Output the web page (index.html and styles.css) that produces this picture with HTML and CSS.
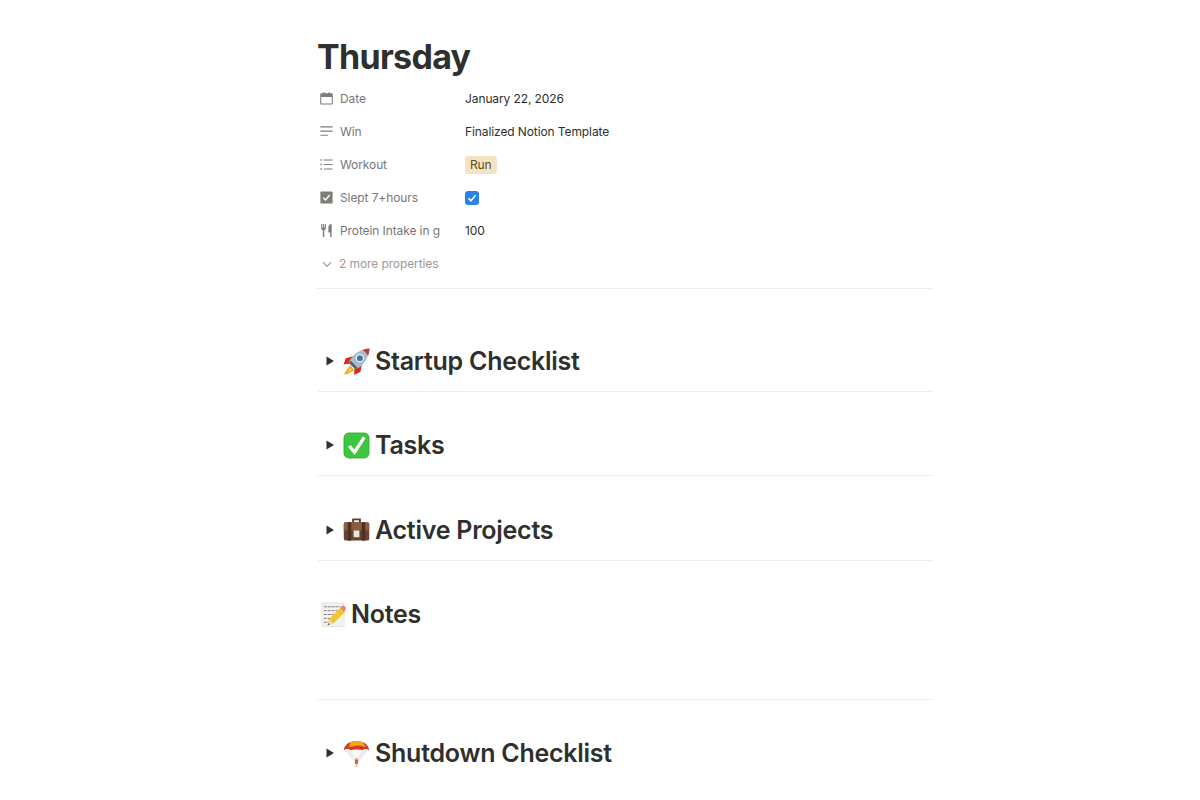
FILE: index.html
```html
<!DOCTYPE html>
<html lang="en">
<head>
<meta charset="utf-8">
<title>Thursday</title>
<link rel="stylesheet" href="styles.css">
</head>
<body>
<main class="page">
  <h1 class="title">Thursday</h1>
  <section class="props">
    <div class="prop">
      <div class="prop-name">
        <svg class="prop-icon" viewBox="0 0 16 16"><path d="M2.500 2.500h2V1.300h1.400v1.200h4.200V1.300h1.400v1.200h2c.7 0 1.200.5 1.200 1.200v9.600c0 .7-.5 1.200-1.200 1.200h-11c-.7 0-1.200-.5-1.200-1.200V3.700c0-.7.5-1.200 1.200-1.200zm-.1 3.900v7h11.200v-7z" fill="#7d7c78" fill-rule="evenodd"/></svg>
        <span>Date</span>
      </div>
      <div class="prop-value">January 22, 2026</div>
    </div>
    <div class="prop">
      <div class="prop-name">
        <svg class="prop-icon" viewBox="0 0 16 16"><path d="M1.500 3h13M1.500 7.500h13M1.500 12h8" stroke="#7d7c78" stroke-width="1.300" fill="none"/></svg>
        <span>Win</span>
      </div>
      <div class="prop-value">Finalized Notion Template</div>
    </div>
    <div class="prop">
      <div class="prop-name">
        <svg class="prop-icon" viewBox="0 0 16 16"><path d="M5 3.200h9.500M5 8h9.500M5 12.800h9.500" stroke="#7d7c78" stroke-width="1.300" fill="none"/><path d="M1.500 2.500h1.500V4H1.500zM1.500 7.250h1.500v1.500H1.500zM1.500 12h1.500v1.500H1.500z" fill="#7d7c78"/></svg>
        <span>Workout</span>
      </div>
      <div class="prop-value"><span class="tag">Run</span></div>
    </div>
    <div class="prop">
      <div class="prop-name">
        <svg class="prop-icon" viewBox="0 0 16 16"><rect x="1.500" y="1.500" width="13" height="13" rx="1" fill="#7d7c78"/><path d="M4.500 8.200l2.400 2.400 4.600-5.200" stroke="#fff" stroke-width="1.500" fill="none"/></svg>
        <span>Slept 7+hours</span>
      </div>
      <div class="prop-value">
        <span class="check"><svg viewBox="0 0 14 14"><path d="M3.500 7.300l2.400 2.500 4.700-5.600" stroke="#fff" stroke-width="1.500" fill="none"/></svg></span>
      </div>
    </div>
    <div class="prop">
      <div class="prop-name">
        <svg class="prop-icon" viewBox="0 0 16 16"><path d="M2.300 1v4.700c0 1.200.8 1.900 1.800 2.100V15h1.500V7.800c1-.2 1.800-.9 1.800-2.100V1H6.300v4H5.500V1H4.200v4h-.8V1zM13.500 1v14H12v-5h-2V4.500C10 2.500 11.500 1 13.500 1z" fill="#7d7c78"/></svg>
        <span>Protein Intake in g</span>
      </div>
      <div class="prop-value">100</div>
    </div>
    <div class="prop more">
      <svg class="more-icon" viewBox="0 0 12 12"><path d="M2 4.300l4 4 4-4" stroke="#9b9a97" stroke-width="1.200" fill="none"/></svg>
      <span>2 more properties</span>
    </div>
  </section>
  <hr class="props-rule">

  <section class="heading first">
    <svg class="caret" viewBox="0 0 10 10"><path d="M1.500 .5L9 5l-7.500 4.500z" fill="#32302c"/></svg>
    <svg class="emoji" viewBox="0 0 28 28">
      <path d="M7.500 18L.5 27.500l3-1.300-.7 1.800L11.500 23z" fill="#f7a21b"/>
      <path d="M7.800 20.500l-3.300 4.700 4.500-2z" fill="#fde26c"/>
      <path d="M10.500 8.500L3 10.500.5 17l8-1z" fill="#d8281f"/>
      <path d="M19.500 17L18 25l-6.500 2.800.5-8z" fill="#d8281f"/>
      <path d="M6 15.500C9 7 17 1.500 27.500.5 26.500 11 21 19 13 22z" fill="#a9bacb"/>
      <path d="M6 15.500L13 22l2.200-1.200-7-7.500z" fill="#56636f"/>
      <path d="M20 2c2.200.9 4.800 3.400 5.900 6 1-2.400 1.500-5 1.600-7.500-2.600.2-5.200.7-7.500 1.500z" fill="#c9342b"/>
      <circle cx="17.500" cy="10.500" r="3.700" fill="#3b74ad" stroke="#eef2f6" stroke-width="1.300"/>
    </svg>
    <h2>Startup Checklist</h2>
  </section>
  <hr class="rule">

  <section class="heading">
    <svg class="caret" viewBox="0 0 10 10"><path d="M1.500 .5L9 5l-7.500 4.500z" fill="#32302c"/></svg>
    <svg class="emoji" viewBox="0 0 28 28">
      <rect x="1" y="1" width="26" height="26" rx="5" fill="#3ec63f"/>
      <rect x="1" y="1" width="26" height="26" rx="5" fill="none" stroke="#2aa12f" stroke-width=".8"/>
      <path d="M6.500 14.500l5.500 6.500L22 5.500" stroke="#fff" stroke-width="3.400" fill="none"/>
    </svg>
    <h2>Tasks</h2>
  </section>
  <hr class="rule">

  <section class="heading">
    <svg class="caret" viewBox="0 0 10 10"><path d="M1.500 .5L9 5l-7.500 4.500z" fill="#32302c"/></svg>
    <svg class="emoji" viewBox="0 0 28 28">
      <path d="M9.500 7V2.500h9V7h-2V4.500h-5V7z" fill="#5a3b2a"/>
      <rect x=".8" y="6.500" width="26.400" height="19" rx="2" fill="#6b4431"/>
      <path d="M.8 8.500c0-1 1-2 2-2h22.400c1 0 2 1 2 2V15H.8z" fill="#8a5d43"/>
      <rect x="5" y="6.500" width="3.500" height="19" fill="#4f3122"/>
      <rect x="19.500" y="6.500" width="3.500" height="19" fill="#4f3122"/>
      <rect x="11" y="15" width="6" height="7" fill="#e9e4dd"/>
    </svg>
    <h2>Active Projects</h2>
  </section>
  <hr class="rule">

  <section class="heading plain">
    <svg class="emoji" viewBox="0 0 28 28">
      <rect x="2" y="2" width="23" height="24.500" fill="#f3f1ec" stroke="#d8d6d0" stroke-width=".6"/>
      <path d="M4 6h17M4 10h14M4 14h10M4 18h7M4 22h6" stroke="#7d7b77" stroke-width="1" stroke-dasharray="3 1"/>
      <path d="M8 25l1.500-6L21 7l5 4.500L14 23z" fill="#f4c430"/>
      <path d="M8 25l1.500-6 4.500 4z" fill="#f1d7b0"/>
      <path d="M8 25l.5-2 1.500 1.400z" fill="#333"/>
      <path d="M21 7l1.800-1.800c.7-.6 1.500-.6 2.200 0l1.500 1.400c.6.700.6 1.500 0 2.200l-1.500 2.700z" fill="#e8837f"/>
    </svg>
    <h2>Notes</h2>
  </section>
  <div class="notes-body"></div>
  <hr class="rule">

  <section class="heading">
    <svg class="caret" viewBox="0 0 10 10"><path d="M1.500 .5L9 5l-7.500 4.500z" fill="#32302c"/></svg>
    <svg class="emoji" viewBox="0 0 28 28">
      <path d="M3 11L13.500 23M8 11l5.500 12M20 11l-5.500 12M25 11L14.500 23" stroke="#b8b8b8" stroke-width=".6" fill="none"/>
      <path d="M3 10.500l5 1 6 12 6-12 5-1L15 23h-2z" fill="#ececec"/>
      <path d="M8 11h12l-6 12z" fill="#f8f8f8"/>
      <path d="M1 10.500C1 5 7 1 14 1s13 4 13 9.500c-2-1.500-5-1.500-7 0-2-1-10-1-12 0-2-1.500-5-1.500-7 0z" fill="#d8381f"/>
      <path d="M8 2.200c3.500-1.400 8.500-1.400 12 0l4 5c-3 0-5-1.500-8-1.500-4 0-7 1.500-10 1.500z" fill="#f2a71b"/>
      <path d="M13 18h2v2h-2z" fill="#e9b9a4"/>
      <rect x="12.300" y="20" width="3.400" height="5" rx="1" fill="#c9674a"/>
      <path d="M13 25h2v3h-2z" fill="#e9b9a4"/>
    </svg>
    <h2>Shutdown Checklist</h2>
  </section>
</main>
</body>
</html>
```

FILE: styles.css
```css
html, body {
  margin: 0;
  padding: 0;
  background: #fff;
}

body {
  font-family: Inter, "Liberation Sans", sans-serif;
  color: #2f2f2d;
  height: 800px;
  overflow: hidden;
}

.page {
  width: 615px;
  margin-left: 318px;
  padding-top: 37px;
}

.title {
  margin: 0 0 0 -1px;
  font-size: 34px;
  line-height: 40px;
  font-weight: 700;
  letter-spacing: -0.7px;
  color: #2f2f2d;
}

.props {
  margin-top: 5px;
}

.prop {
  display: flex;
  align-items: center;
  height: 33px;
  font-size: 12px;
  letter-spacing: -0.1px;
}

.prop-name {
  display: flex;
  align-items: center;
  width: 147px;
  padding-left: 1px;
  gap: 6px;
  box-sizing: border-box;
  color: #787774;
}

.prop-icon {
  width: 15px;
  height: 15px;
  flex: none;
}

.prop-value {
  display: flex;
  align-items: center;
  color: #2f2f2d;
}

.tag {
  background: #f3e3c3;
  color: #5f4a23;
  border-radius: 3px;
  padding: 0 5px;
  height: 18px;
  line-height: 18px;
}

.check {
  display: block;
  width: 14px;
  height: 14px;
  border-radius: 3px;
  background: #2a84e4;
}

.check svg {
  display: block;
  width: 14px;
  height: 14px;
}

.more {
  color: #9b9a97;
  padding-left: 3px;
  gap: 6px;
}

.more-icon {
  width: 12px;
  height: 12px;
}

.props-rule {
  margin: 8px 0 0 -2px;
  width: 617px;
  height: 1px;
  border: 0;
  background: #ececeb;
}

.rule {
  margin: 0;
  height: 1px;
  border: 0;
  background: #ececeb;
}

.heading {
  display: flex;
  align-items: center;
  height: 40px;
  margin-top: 33.4px;
  margin-bottom: 10px;
  padding-left: 7px;
}

.heading.first {
  margin-top: 52px;
}

.heading.plain {
  padding-left: 2px;
}

.heading.plain .emoji {
  margin-right: 4px;
}

.heading h2 {
  margin: 0;
  font-size: 25px;
  line-height: 32px;
  font-weight: 600;
  letter-spacing: -0.25px;
  color: #2f2f2d;
}

.caret {
  width: 10px;
  height: 10px;
  flex: none;
  margin-right: 8px;
}

.emoji {
  width: 27px;
  height: 27px;
  flex: none;
  margin-right: 5px;
}

.notes-body {
  height: 54.5px;
}
```
